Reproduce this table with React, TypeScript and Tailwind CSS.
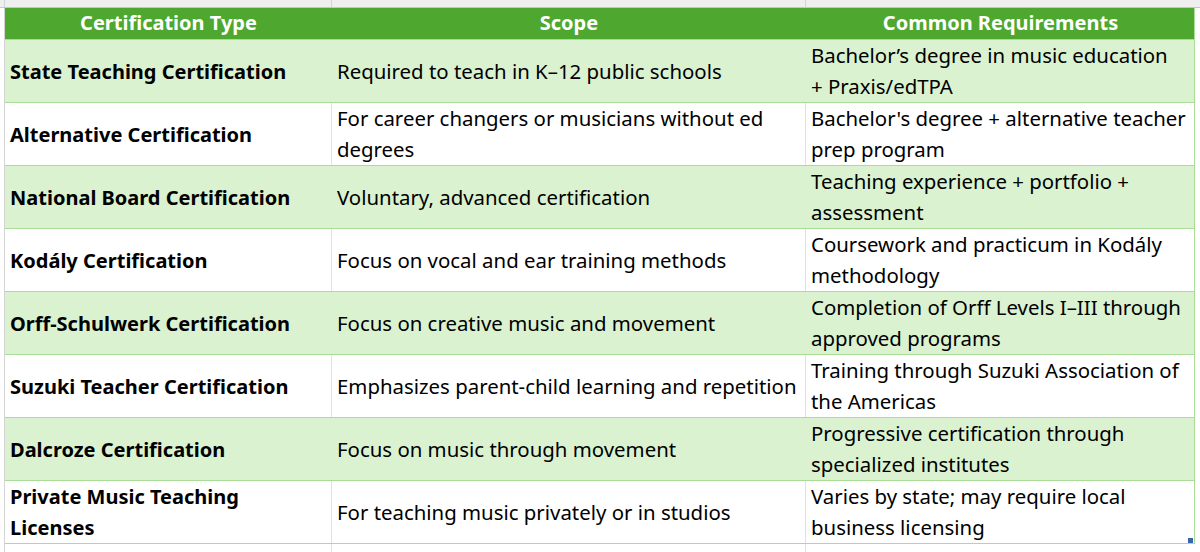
import React from 'react';

// line breaks follow the reference wrap points
const rows: [string, string, string][] = [
  ['State Teaching Certification', 'Required to teach in K–12 public schools', 'Bachelor’s degree in music education\n+ Praxis/edTPA'],
  ['Alternative Certification', 'For career changers or musicians without ed\ndegrees', "Bachelor's degree + alternative teacher\nprep program"],
  ['National Board Certification', 'Voluntary, advanced certification', 'Teaching experience + portfolio +\nassessment'],
  ['Kodály Certification', 'Focus on vocal and ear training methods', 'Coursework and practicum in Kodály\nmethodology'],
  ['Orff-Schulwerk Certification', 'Focus on creative music and movement', 'Completion of Orff Levels I–III through\napproved programs'],
  ['Suzuki Teacher Certification', 'Emphasizes parent-child learning and repetition', 'Training through Suzuki Association of\nthe Americas'],
  ['Dalcroze Certification', 'Focus on music through movement', 'Progressive certification through\nspecialized institutes'],
  ['Private Music Teaching\nLicenses', 'For teaching music privately or in studios', 'Varies by state; may require local\nbusiness licensing'],
];

export default function App() {
  return (
    <div
      className="w-[1200px] h-[552px] overflow-hidden bg-white text-black"
      style={{ fontFamily: '"Noto Sans", "Open Sans", sans-serif' }}
    >
      {/* top strip of the sheet */}
      <div className="flex h-[8px] bg-[#efefef] border-b border-[#c6c6c6]">
        <div className="w-[5px] border-r border-[#d4d4d4]" />
        <div className="w-[327px] border-r border-[#d4d4d4]" />
        <div className="w-[474px] border-r border-[#d4d4d4]" />
        <div className="flex-1" />
      </div>

      <div className="flex">
        <div className="w-[5px] border-r border-[#d4d4d4]" />
        <div className="relative w-[1190px] border-r border-[#a9dc96]">
          {/* header */}
          <div className="grid grid-cols-[327px_474px_389px] h-[32px] bg-[#4ea72e] border-b border-[#a9dc96] text-white font-bold text-[20px] leading-[30px]">
            <div className="text-center">Certification Type</div>
            <div className="text-center">Scope</div>
            <div className="text-center">Common Requirements</div>
          </div>

          {rows.map((r, i) => {
            const green = i % 2 === 0;
            return (
              <div
                key={i}
                className={`grid grid-cols-[327px_474px_389px] h-[63px] border-b border-[#a9dc96] text-[20.4px] leading-[31px] whitespace-pre-line ${
                  green ? 'bg-[#daf2d0]' : 'bg-white'
                }`}
              >
                <div className={`flex items-center px-[5px] font-bold text-[20px] ${green ? '' : 'border-r border-[#e1e1e1]'}`}>
                  {r[0]}
                </div>
                <div className={`flex items-center px-[5px] ${green ? '' : 'border-r border-[#e1e1e1]'}`}>{r[1]}</div>
                <div className="flex items-center px-[5px]">{r[2]}</div>
              </div>
            );
          })}

          {/* fill handle */}
          <div className="absolute right-[1px] bottom-[1px] w-[5px] h-[5px] bg-[#3a64b0]" />
        </div>
        <div className="flex-1" />
      </div>

      <div className="flex h-[20px]">
        <div className="w-[5px] border-r border-[#d4d4d4]" />
        <div className="w-[327px] border-r border-[#e1e1e1]" />
        <div className="w-[474px] border-r border-[#e1e1e1]" />
        <div className="flex-1" />
      </div>
    </div>
  );
}
